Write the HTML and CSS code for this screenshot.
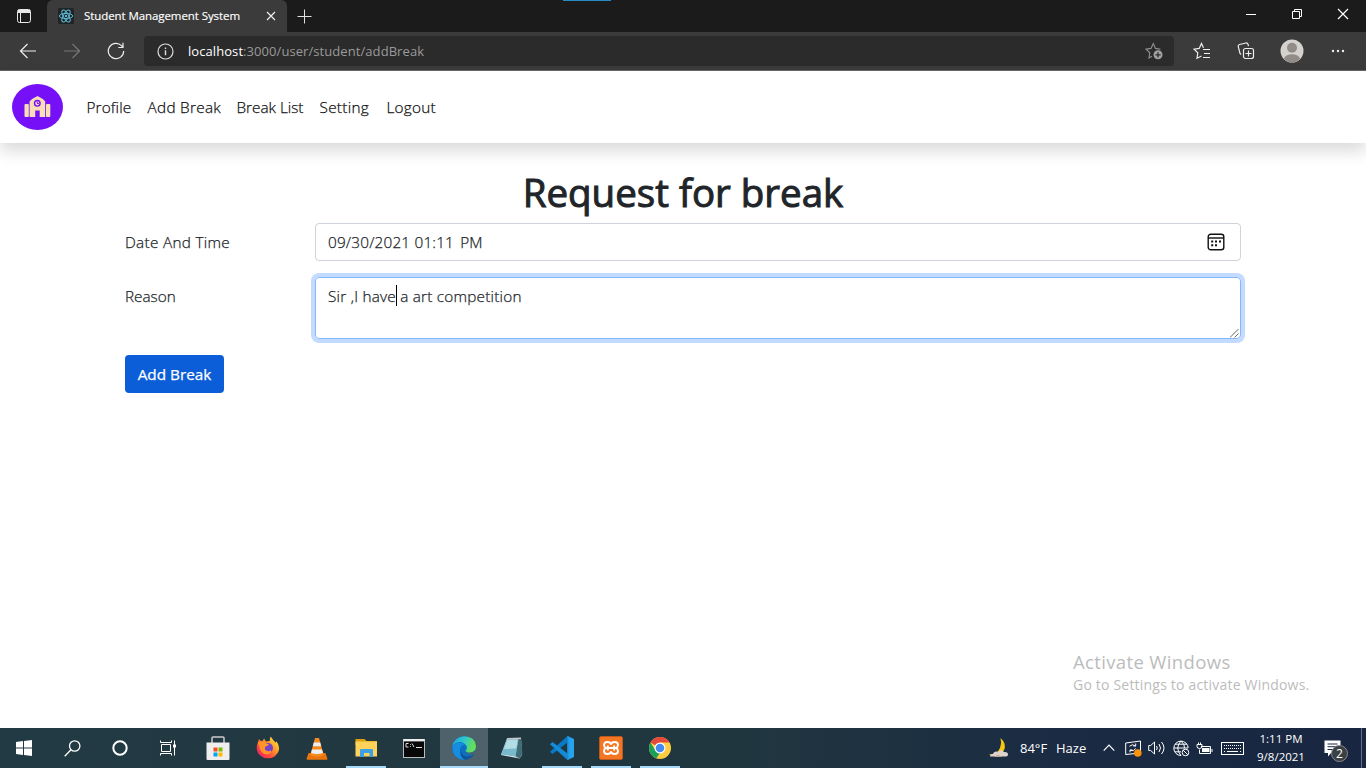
FILE: index.html
```html
<!DOCTYPE html>
<html lang="en">
<head>
<meta charset="utf-8">
<title>Student Management System</title>
<link rel="stylesheet" href="styles.css">
</head>
<body>
<div class="screen">
  <header class="tabstrip">
    <div class="tab-actions">
      <svg width="16" height="16" viewBox="0 0 16 16" fill="none" stroke="#e8e8e8"><rect x="1.5" y="1.5" width="13" height="13" rx="2"/><path d="M2 2.8h12M2 4h12" stroke-width="2"/><path d="M4.5 4v10"/></svg>
    </div>
    <div class="tab">
      <svg class="favicon" width="16" height="16" viewBox="0 0 16 16" fill="none" stroke="#5ab9d2"><rect width="16" height="16" rx="1.5" fill="#202327" stroke="none"/><ellipse cx="8" cy="8" rx="6.7" ry="2.6"/><ellipse cx="8" cy="8" rx="6.7" ry="2.6" transform="rotate(60 8 8)"/><ellipse cx="8" cy="8" rx="6.7" ry="2.6" transform="rotate(120 8 8)"/><circle cx="8" cy="8" r="1.2" fill="#5ab9d2" stroke="none"/></svg>
      <span class="tab-title">Student Management System</span>
      <svg class="tab-close" width="10" height="10" viewBox="0 0 10 10" stroke="#f0f0f0" stroke-width="1.2"><path d="M1 1l8 8M9 1l-8 8"/></svg>
    </div>
    <svg class="new-tab" width="15" height="15" viewBox="0 0 15 15" stroke="#e0e0e0"><path d="M7.5 0.5v14M0.5 7.5h14"/></svg>
    <div class="tab-indicator"></div>
    <div class="window-buttons">
      <svg width="12" height="12" viewBox="0 0 12 12" stroke="#fff" fill="none"><path d="M1 6.5h10"/></svg>
      <svg width="12" height="12" viewBox="0 0 12 12" stroke="#fff" fill="none"><path d="M1.5 3.5h7v7h-7zM3.5 3.500v-2h7v7h-2"/></svg>
      <svg width="12" height="12" viewBox="0 0 12 12" stroke="#fff" fill="none" stroke-width="1.2"><path d="M1 1l10 10M11 1L1 11"/></svg>
    </div>
  </header>

  <div class="toolbar">
    <div class="nav-buttons">
      <svg width="18" height="16" viewBox="0 0 18 16" fill="none" stroke="#eee" stroke-width="1.2"><path d="M17 8H1.500M8.500 1L1.500 8l7 7"/></svg>
      <svg width="18" height="16" viewBox="0 0 18 16" fill="none" stroke="#777" stroke-width="1.2"><path d="M1 8h15.500M9.500 1l7 7-7 7"/></svg>
      <svg width="18" height="18" viewBox="0 0 18 18" fill="none" stroke="#eee" stroke-width="1.2"><path d="M16.700 9a7.700 7.700 0 1 1-2.200-5.400L16 5.300M16 .8v4.700h-4.700"/></svg>
    </div>
    <div class="address">
      <svg width="17" height="17" viewBox="0 0 17 17" fill="none" stroke="#ddd"><circle cx="8.500" cy="8.500" r="7.500" stroke-width="1.200"/><path d="M8.500 7.200v5M8.500 4.500v1.400" stroke-width="1.400"/></svg>
      <span class="url"><span class="host">localhost</span>:3000/user/student/addBreak</span>
      <svg class="add-fav" width="18" height="18" viewBox="0 0 18 18" fill="none" stroke="#929292" stroke-width="1.100"><path d="M7 14.300L4 16l.8-5.200L1 7.200l5-.8L8.300 1.500l2.200 4.900 5 .8"/><circle cx="13" cy="12.800" r="4.500" fill="#a2a2a2" stroke="none"/><path d="M13 10.200v5.200M10.400 12.800h5.200" stroke="#303030" stroke-width="1.300"/></svg>
    </div>
    <div class="tools">
      <svg width="18" height="18" viewBox="0 0 18 18" fill="none" stroke="#eee" stroke-width="1.200"><path d="M8.500 14L4 16.200l.8-5.400L1 7.200l5.200-.8L8.500 1.500l2 4.200M10 7.500h7M11 11.500h6M10 15.500h7"/></svg>
      <svg width="18" height="18" viewBox="0 0 18 18" fill="none" stroke="#eee" stroke-width="1.200"><rect x="6.500" y="6.500" width="10" height="10" rx="2"/><path d="M11.500 8.500v6M8.500 11.500h6M4.200 12.500L3 11.500 1.200 4.500Q1 3 2.500 2.500L9 1q1.500-.2 2 1.200l.5 2"/></svg>
      <svg width="24" height="24" viewBox="0 0 24 24"><circle cx="12" cy="12" r="11.500" fill="#d4d2ce"/><circle cx="12" cy="8.800" r="5" fill="#918c87"/><path d="M3.800 20a8.300 5.700 0 0 1 16.400 0A11.500 11.500 0 0 1 3.800 20z" fill="#918c87"/></svg>
      <svg width="14" height="4" viewBox="0 0 14 4" fill="#eee"><circle cx="2" cy="2" r="1.200"/><circle cx="7" cy="2" r="1.200"/><circle cx="12" cy="2" r="1.200"/></svg>
    </div>
  </div>

  <main class="page">
    <nav class="navbar">
      <svg class="brand" width="51" height="46" viewBox="0 0 51 46"><ellipse cx="25.500" cy="23" rx="25.500" ry="23" fill="#7611f7"/><g fill="#f8dfb5"><rect x="12.500" y="20" width="4.300" height="13" rx="1"/><rect x="34" y="20" width="4.300" height="13" rx="1"/><path d="M17.600 33V17.500Q20 14.500 25.500 12q5.500 2.500 7.700 5.500V33h-5.500v-6.500h-4.500V33z"/></g><circle cx="25.300" cy="19.300" r="2.800" fill="#f8dfb5" stroke="#7611f7" stroke-width="1.400"/><path d="M25.300 17.500v2h1.600" fill="none" stroke="#7611f7"/></svg>
      <ul class="links">
        <li class="l-profile">Profile</li><li class="l-add">Add Break</li><li class="l-list">Break List</li><li class="l-setting">Setting</li><li class="l-logout">Logout</li>
      </ul>
    </nav>
    <form class="form">
      <h1>Request for break</h1>
      <div class="row">
        <label class="lb-date">Date And Time</label>
        <div class="control">
          <span class="datetime">09/30/2021 01:11 <span class="meridiem">PM</span></span>
          <svg width="18" height="18" viewBox="0 0 18 18" fill="none" stroke="#111" stroke-width="1.400"><rect x="1.200" y="1.200" width="15.600" height="15.600" rx="2.500"/><path d="M1 5h16"/><path d="M4.200 8.500h2M8 8.500h2M12 8.500h2M4.200 12.200h2M8 12.200h2" stroke-width="2"/></svg>
        </div>
      </div>
      <div class="row">
        <label class="lb-reason">Reason</label>
        <div class="control area">
          <span class="reason"><span>Sir ,I have</span><i class="caret"></i><span> a art competition</span></span>
          <svg class="grip" width="9" height="9" viewBox="0 0 9 9" stroke="#555" stroke-width=".9"><path d="M0 8.500L8.500 0M4.500 8.500l4-4"/></svg>
        </div>
      </div>
      <button type="button" class="submit">Add Break</button>
    </form>
    <div class="watermark"><div class="wm-title">Activate Windows</div><div class="wm-sub">Go to Settings to activate Windows.</div></div>
  </main>

  <footer class="taskbar">
    <div class="system-items">
      <div class="item"><svg width="16" height="16" viewBox="0 0 16 16" fill="#fff"><path d="M0 2l7-1v6.500H0zM8 .9L16 0v7.500H8zM0 8.500h7V15l-7-1zM8 8.500h8V16l-8-1z"/></svg></div>
      <div class="item"><svg width="17" height="17" viewBox="0 0 17 17" fill="none" stroke="#fff" stroke-width="1.300"><circle cx="10.700" cy="6" r="5.200"/><path d="M7 9.800L.7 16.300"/></svg></div>
      <div class="item"><svg width="16" height="16" viewBox="0 0 16 16"><circle cx="8" cy="8" r="6.700" fill="none" stroke="#fff" stroke-width="2"/></svg></div>
      <div class="item"><svg width="17" height="16" viewBox="0 0 17 16" fill="none" stroke="#fff"><path d="M.5.5v2h11v-2M.5 15.500v-2h11v2M1.500 4.500h9v7h-9zM14.500.500v15"/><path d="M13 4.500h3v3h-3z" fill="#fff" stroke="none"/></svg></div>
    </div>
    <div class="apps">
      <div class="item nudge"><svg width="24" height="24" viewBox="0 0 24 24"><path d="M6 8V2q0-1 1-1h10q1 0 1 1v6" fill="none" stroke="#ccc" stroke-width="1.500"/><path d="M.5 6.500h23V23q0 1-1 1h-21q-1 0-1-1z" fill="#eee"/><path d="M7.500 11.500h4v4h-4z" fill="#f25022"/><path d="M12.500 11.500h4v4h-4z" fill="#7fba00"/><path d="M7.500 16.500h4v4h-4z" fill="#00a4ef"/><path d="M12.500 16.500h4v4h-4z" fill="#ffb900"/></svg></div>
      <div class="item"><svg width="24" height="24" viewBox="0 0 24 24"><defs><linearGradient id="ff" x1="1" y1="0" x2="0" y2="1"><stop offset="0" stop-color="#fff44f"/><stop offset=".35" stop-color="#ffa628"/><stop offset=".65" stop-color="#ff4b3a"/><stop offset="1" stop-color="#e5137c"/></linearGradient></defs><path d="M2 6l1-3 2 2.300 2-.8 1-2 2 3q2 0 4-.8-.5-2 .8-4.200 2 3.500 5 6.200l.5-1.500Q23.500 9 23 14a11.300 10.500 0 0 1-22.300-1Q.5 8.500 2 6z" fill="url(#ff)"/><circle cx="12" cy="12" r="5" fill="#7543c8"/><path d="M2 6.500q3-2 6-.5 2 2 5 2.200-1 2-3.500 2.300Q8 13 10 14.500q3 1.500 5-.3 1 3-3 4-6 .8-8-5z" fill="#ff942d"/></svg></div>
      <div class="item"><svg width="24" height="24" viewBox="0 0 24 24"><path d="M3.500 17h17l2 6q0 .8-1 .8h-19q-1 0-1-.8z" fill="#e9750c"/><path d="M10 2h4l4.700 17q-6.700 3-13.400 0z" fill="#f68b1f"/><path d="M8.800 6.500h6.400l1 3.800H7.800zM7 13.500h10l1 3.500q-6 2.200-12 0z" fill="#eee"/></svg></div>
      <div class="item open"><svg width="24" height="24" viewBox="0 0 24 24"><path d="M1.500 3h9l2 2h10.500v4H1.500z" fill="#dda20b"/><path d="M1.500 5.500H23v15H1.500z" fill="#ffd35b"/><path d="M6 21v-7q0-1 1-1h11q1 0 1 1v7h-3.500v-4h-5.500v4z" fill="#3ba0e6"/></svg></div>
      <div class="item nudge"><svg width="24" height="24" viewBox="0 0 24 24"><path d="M1 3h22v19H1z" fill="#bbb"/><path d="M1.500 3h21v2h-21z" fill="#eee"/><path d="M2 5.500h20V21H2z" fill="#080808"/><path d="M6.500 7.500H4v3.500h2.500M8.500 8v.8M8.500 10v.8M10 7.500l2 3.500M14 11.500h6" fill="none" stroke="#ddd"/></svg></div>
      <div class="item active"><svg width="24" height="24" viewBox="0 0 24 24"><defs><linearGradient id="e1" x1="0" y1="0" x2="1" y2=".3"><stop offset="0" stop-color="#1b9de2"/><stop offset=".55" stop-color="#32c8c9"/><stop offset="1" stop-color="#65e052"/></linearGradient></defs><circle cx="12" cy="12" r="11.800" fill="#0b6fc2"/><path d="M.3 11Q1.500 1 12 .2 23 .5 24 10q0 6-6.500 6.500-4 0-4-2 2-1.500 1-4.500Q12 6 7.500 6 2.500 6.500.3 11z" fill="url(#e1)"/><path d="M.3 12Q2 7 7.500 6.500q3.500 0 5.500 2-4 .5-4.800 4.500Q8 19 14 22.500l-2 1.300Q1 23 .3 12z" fill="#168de0"/><path d="M9 11q-1.500 8 5 9.500 4.500.5 8.500-3-3 5.500-9.500 6.300-7-3.800-4-12.800z" fill="#10539b"/><path d="M14 14.700q0 2.300 4 2.300 3.500-.3 5.300-2.500l1 0v4.500l-2-.5q-5 1-7.800-1-1.500-1.300-.5-2.800z" fill="#4d626b"/></svg></div>
      <div class="item nudge"><svg width="24" height="24" viewBox="0 0 24 24"><path d="M7 2.500l14-.5 1 17-2.500 3.500L1 19z" fill="#e4ebec"/><path d="M7 3l11.500-.5-3 18L1 18.500z" fill="#78b9cb"/><path d="M7.300 4l10.500-.5-1.500 9L4 13z" fill="#b4dee5"/><path d="M18.500 2.500L21 2l1.500 16-3 4.500-4-2z" fill="#406c78"/><path d="M7 2.800l14-.6" stroke="#c9c9c9" stroke-width="1.500"/></svg></div>
      <div class="item open"><svg width="24" height="24" viewBox="0 0 24 24"><path d="M17.500 0L24 3v18l-6.500 3z" fill="#27a4ee"/><path d="M17.500 6.500L2.500 18 0 15.800 17.500 0z" fill="#0879c7"/><path d="M17.500 17.500L2.500 6 0 8.200 17.500 24z" fill="#148bd9"/><path d="M17.500 0v24l2-1V1z" fill="#1e98e5"/></svg></div>
      <div class="item open"><svg width="24" height="24" viewBox="0 0 24 24"><rect x=".5" y=".5" width="23" height="23" rx="1.500" fill="#f37623" stroke="#bd591d"/><path d="M12 8.500Q11.500 6 8.500 6 5 6 5 9q0 2.300 2 3-2 .7-2 3 0 3 3.500 3 3 0 3.500-2.500.5 2.500 3.500 2.500 3.500 0 3.500-3 0-2.300-2-3 2-.7 2-3 0-3-3.500-3-3 0-3.500 2.500zM8.800 9.500v1.300q0 1.200 1.500 1.200h3.400q1.500 0 1.500-1.200V9.500M8.800 14.500v-1.300q0-1.200 1.500-1.200M15.200 14.500v-1.300q0-1.200-1.500-1.200" fill="none" stroke="#fff" stroke-width="1.900"/></svg></div>
      <div class="item open"><svg width="24" height="24" viewBox="0 0 24 24"><circle cx="12" cy="12" r="11" fill="#ffcd40"/><path d="M12 12L2.500 6.500A11 11 0 0 1 21.500 6.500H12z" fill="#e6483b"/><path d="M2.500 6.500l5 8.200 4.500 2.300-3.800 5.300A11 11 0 0 1 2.500 6.500z" fill="#1ba05a"/><circle cx="12" cy="12" r="5.500" fill="#fff"/><circle cx="12" cy="12" r="4.300" fill="#4688f1"/></svg></div>
    </div>
    <div class="tray">
      <svg class="weather" width="24" height="22" viewBox="0 0 24 22"><path d="M13.500 1q7 6 3 13-6 6-15 3.500 9-.5 11.500-6.500 2-5 .5-10z" fill="#f9c513"/><path d="M3 19.500q0-2.700 3-2.500 1.500-3.500 5-2 3-3.500 6 0 4-.5 4 2.500 0 2-3 2z" fill="#ddd4ce"/><path d="M7 20q4-4 8 0z" fill="#c8a995"/></svg>
      <span class="temp">84°F</span><span class="haze">Haze</span>
      <svg class="chevron" width="12" height="8" viewBox="0 0 12 8" fill="none" stroke="#fff" stroke-width="1.200"><path d="M.7 6.700L6 1.200l5.300 5.500"/></svg>
      <svg class="update" width="17" height="17" viewBox="0 0 17 17" fill="none" stroke="#fff"><path d="M.7 3l14.800-2v12L.7 14.500z"/><path d="M4.500 6.300q3-3 6-.3M10.700 3.500V6H8.300M10.700 8.500q-2 3.500-5.700 1.700M5 12.300V10h2.500"/><circle cx="12.800" cy="13" r="3.800" fill="#fb930b" stroke="none"/></svg>
      <svg class="sound" width="17" height="14" viewBox="0 0 17 14" fill="none" stroke="#fff"><path d="M.7 4.500h2L6.500 1v12L2.700 9.500h-2zM8.500 5q1.500 2 0 4M11 3q3 4 0 8M13.500 1q5 6 0 12"/></svg>
      <svg class="globe" width="17" height="17" viewBox="0 0 17 17" fill="none" stroke="#fff"><path d="M8 15.500A7.200 7.200 0 1 1 15.200 8M.8 8H15M2 4.200h12M2 11.800h6M8 1q-6.500 7 0 14.500M8 1q4 3.500 3.500 7"/><circle cx="12.500" cy="12.500" r="3.300"/><path d="M10.200 10.200l4.600 4.600"/></svg>
      <svg class="battery" width="17" height="13" viewBox="0 0 17 13" fill="none" stroke="#fff"><path d="M5 4.500h9.500v7h-11v-4M16 7v3"/><path d="M6 6h7.500v4H6z" fill="#fff" stroke="none"/><path d="M1 2.500h5v2q0 2-2.500 2T1 4.500zM2.500.5v2M4.500.5v2"/></svg>
      <svg class="keyboard" width="23" height="13" viewBox="0 0 23 13" fill="none" stroke="#fff"><rect x=".5" y=".5" width="22" height="12"/><path d="M3 3.500h18M3 6.500h18" stroke-dasharray="1 1"/><path d="M3 9.500h1M6 9.500h11M19 9.500h1"/></svg>
      <div class="clock"><span class="time">1:11 PM</span><span class="date">9/8/2021</span></div>
      <div class="notify"><svg width="17" height="17" viewBox="0 0 17 17"><path d="M.5.5h16v12.500H7L4 16.500V13H.5z" fill="#fff"/><path d="M3.500 4h10M3.500 6.700h10M3.500 9.500h7" stroke="#1b2a45"/></svg><span class="count">2</span></div>
      <div class="peek"></div>
    </div>
  </footer>
</div>
</body>
</html>
```
FILE: styles.css
```css
* { box-sizing: border-box; }
body { margin: 0; font-family: "Open Sans", "Noto Sans", sans-serif; overflow: hidden; }
svg { display: block; flex: none; }
span, li, label, .submit, h1, .wm-title, .wm-sub { white-space: nowrap; }
.screen { width: 1366px; height: 768px; display: flex; flex-direction: column; background: #fff; }

.tabstrip { height: 32px; background: #1b1b1b; display: flex; align-items: center; }
.tab-actions { width: 47px; display: flex; justify-content: center; }
.tab { width: 240px; height: 32px; background: #3b3b3b; border-radius: 6px 6px 0 0; display: flex; align-items: center; padding: 0 11px 0 11px; }
.tab-title { color: #fff; font-size: 11.5px; line-height: 16px; margin-left: 10px; margin-bottom: 1px; flex: 1; letter-spacing: -.08px; -webkit-text-stroke: .15px #fff; }
.new-tab { margin-left: 10px; }
.tab-indicator { align-self: flex-start; margin-left: 251px; width: 48px; height: 1px; background: #278bc6; }
.window-buttons { margin-left: auto; display: flex; gap: 34px; padding-right: 17px; margin-bottom: 4px; }

.toolbar { height: 39px; background: #3b3b3b; border-bottom: 1px solid #666; display: flex; align-items: center; }
.nav-buttons { width: 144px; padding-left: 19px; display: flex; align-items: center; gap: 26px; }
.address { width: 1030px; height: 30px; border-radius: 4px; background: #2b2b2b; display: flex; align-items: center; padding: 0 11px 0 13px; }
.url { margin-left: 14px; font-size: 13px; letter-spacing: .07px; color: #9a9a9a; flex: 1; }
.host { color: #fff; }
.tools { display: flex; align-items: center; margin-left: 19px; }
.tools svg:nth-child(2) { margin-left: 26px; }
.tools svg:nth-child(3) { margin-left: 25px; }
.tools svg:nth-child(4) { margin-left: 27px; }

.page { height: 657px; position: relative; color: #212529; font-size: 15.3px; font-weight: 300; -webkit-text-stroke: .25px; }
.navbar { height: 72px; display: flex; align-items: center; padding-left: 12px; background: #fff; box-shadow: 0 8px 16px rgba(0,0,0,.15); }
.links { list-style: none; display: flex; margin: 0 0 0 23.5px; padding: 0; gap: 16px; color: #111; line-height: 24px; letter-spacing: .15px; }
.l-profile { width: 45px; }
.l-add { width: 73px; letter-spacing: .3px; }
.l-list { width: 67px; letter-spacing: 0; }
.l-setting { width: 51px; letter-spacing: .3px; }
.l-logout { width: 50px; letter-spacing: .25px; }
.form { width: 1116px; margin: 25px auto 0; }
h1 { margin: 0 0 7px; font-size: 38.5px; line-height: 48px; font-weight: 400; text-align: center; color: #212529; -webkit-text-stroke: 1px; }
.row { display: grid; grid-template-columns: 190px 926px; align-items: start; margin-bottom: 16px; }
.row label { line-height: 24px; padding-top: 7px; }
.lb-date { letter-spacing: .3px; }
.control { height: 38px; border: 1px solid #ced4da; border-radius: 4px; padding: 6px 16px 6px 12px; display: flex; align-items: center; justify-content: space-between; line-height: 24px; letter-spacing: .2px; }
.control > svg { margin-right: -.5px; margin-bottom: 1px; }
.meridiem { margin-left: 2px; }
.area { height: 62px; border-color: #86b7fe; box-shadow: 0 0 0 4px #c2dbfe; align-items: flex-start; padding-right: 1px; padding-bottom: 0; letter-spacing: .23px; }
.reason { display: flex; white-space: pre; }
.reason span { white-space: pre; }
.caret { width: 1px; height: 21px; margin-right: -1px; margin-top: 1px; background: #000; }
.area .grip { align-self: flex-end; margin: 0; }
.submit { display: block; width: 99px; height: 38px; border: 0; border-radius: 4px; background: #0b5ed7; color: #fff; font: 400 15.3px/24px "Open Sans", sans-serif; padding: 0; }
.watermark { position: absolute; left: 1073px; top: 579px; color: #bcbcbc; -webkit-text-stroke: 0; }
.wm-title { font-size: 18.5px; line-height: 24px; font-weight: 400; letter-spacing: .36px; }
.wm-sub { font-size: 14px; line-height: 22px; font-weight: 400; letter-spacing: .2px; }

.taskbar { height: 40px; display: flex; background: linear-gradient(90deg, #223a43 0%, #20363f 55%, #1a2b43 78%, #192641 100%); color: #fff; }
.system-items { display: flex; width: 195px; }
.apps { display: flex; gap: 1px; }
.item { width: 48px; height: 40px; display: flex; align-items: center; justify-content: center; }
.nudge { padding-right: 2px; }
.open { background: linear-gradient(#a6d8fa, #a6d8fa) 4px 38px / 40px 2px no-repeat; }
.active { background: linear-gradient(#a6d8fa, #a6d8fa) 0 38px / 48px 2px no-repeat #4d626b; }
.tray { margin-left: auto; width: 379px; display: flex; align-items: center; font-size: 13px; }
.temp { margin-left: 9px; width: 28px; }
.haze { margin-left: 8px; width: 31px; }
.chevron { margin-left: 16px; }
.update { margin-left: 10px; }
.sound { margin-left: 6px; }
.globe { margin-left: 8px; }
.battery { margin-left: 6px; }
.keyboard { margin-left: 8px; }
.clock { width: 74px; margin-bottom: 1px; display: flex; flex-direction: column; align-items: center; font-size: 11.5px; line-height: 18px; }
.notify { width: 35px; padding-left: 6px; position: relative; }
.count { position: absolute; left: 13px; top: 5px; width: 17px; height: 17px; border-radius: 50%; background: #3b4045; border: 1px solid #888; font-size: 12px; line-height: 15px; text-align: center; }
.peek { width: 1px; height: 40px; background: #63708a; margin-left: auto; margin-right: 4px; }
```
